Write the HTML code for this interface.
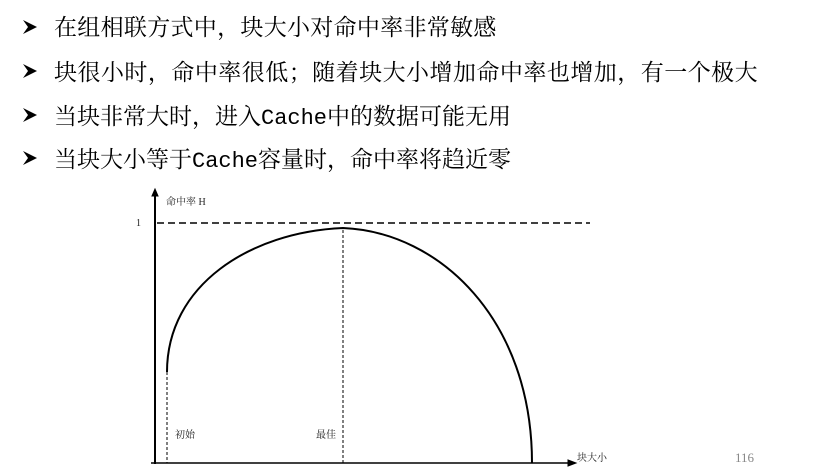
<!DOCTYPE html>
<html><head><meta charset="utf-8"><style>
body{margin:0;width:813px;height:476px;background:#fff;overflow:hidden;position:relative;font-family:"Liberation Serif","Noto Serif CJK SC",serif;}
.l{position:absolute;left:54px;font-size:23px;color:#000;white-space:nowrap;line-height:26px;font-family:"Noto Serif CJK SC",serif}
.l i{font-style:normal;font-family:"Liberation Mono",monospace;font-size:22px}
.s{position:absolute;font-size:10px;color:#222;white-space:nowrap;font-family:"Liberation Serif","Noto Serif CJK SC",serif}
</style></head><body>
<div class="l" style="top:13px;letter-spacing:0.3px">在组相联方式中，块大小对命中率非常敏感</div>
<div class="l" style="top:58px;letter-spacing:0.47px">块很小时，命中率很低；随着块大小增加命中率也增加，有一个极大</div>
<div class="l" style="top:102px">当块非常大时，进入<i>Cache</i>中的数据可能无用</div>
<div class="l" style="top:145px">当块大小等于<i>Cache</i>容量时，命中率将趋近零</div>
<svg width="813" height="476" style="position:absolute;left:0;top:0">
<g fill="#000">
<path d="M23,20 L37,27 L23,34 L28,27Z"/>
<path d="M23,64 L37,71 L23,78 L28,71Z"/>
<path d="M23,108 L37,115 L23,122 L28,115Z"/>
<path d="M23,151 L37,158 L23,165 L28,158Z"/>
</g>
<g stroke="#000" fill="none">
<line x1="155" y1="464" x2="155" y2="196" stroke-width="2"/>
<path d="M152,196 L155,189 L158,196Z" fill="#000"/>
<line x1="151" y1="463" x2="570" y2="463" stroke-width="1.5"/>
<path d="M568,460 L576,463 L568,466Z" fill="#000"/>
<line x1="157" y1="223" x2="590" y2="223" stroke-width="1.5" stroke-dasharray="7,4"/>
<line x1="167" y1="372" x2="167" y2="463" stroke-dasharray="3,2"/>
<line x1="343" y1="230" x2="343" y2="463" stroke-dasharray="3,2"/>
<path d="M167,372 C167,285 250,232 343,228 C440,232 532,320 532,463" stroke-width="2"/>
</g></svg>
<div class="s" style="left:166px;top:193px">命中率 H</div>
<div class="s" style="left:136px;top:218px">1</div>
<div class="s" style="left:175px;top:426px">初始</div>
<div class="s" style="left:316px;top:426px">最佳</div>
<div class="s" style="left:577px;top:449px">块大小</div>
<div class="s" style="left:735px;top:450px;font-size:13px;color:#888">116</div>
</body></html>
